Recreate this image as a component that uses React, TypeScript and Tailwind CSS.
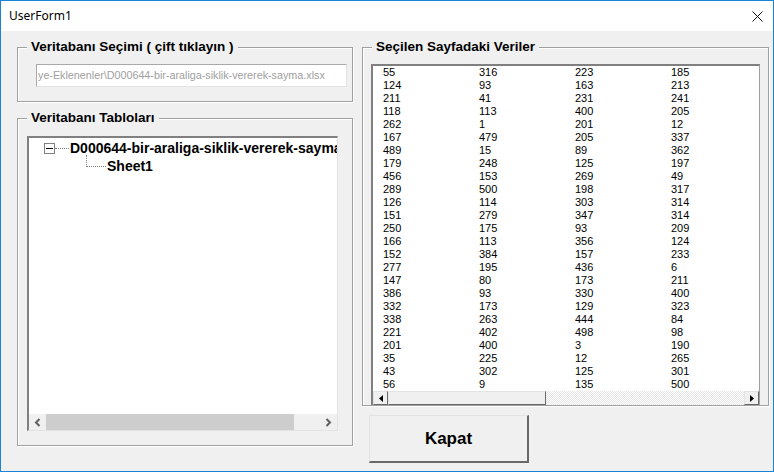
import React from "react";

const rows: string[][] = [
  ["55", "316", "223", "185"],
  ["124", "93", "163", "213"],
  ["211", "41", "231", "241"],
  ["118", "113", "400", "205"],
  ["262", "1", "201", "12"],
  ["167", "479", "205", "337"],
  ["489", "15", "89", "362"],
  ["179", "248", "125", "197"],
  ["456", "153", "269", "49"],
  ["289", "500", "198", "317"],
  ["126", "114", "303", "314"],
  ["151", "279", "347", "314"],
  ["250", "175", "93", "209"],
  ["166", "113", "356", "124"],
  ["152", "384", "157", "233"],
  ["277", "195", "436", "6"],
  ["147", "80", "173", "211"],
  ["386", "93", "330", "400"],
  ["332", "173", "129", "323"],
  ["338", "263", "444", "84"],
  ["221", "402", "498", "98"],
  ["201", "400", "3", "190"],
  ["35", "225", "12", "265"],
  ["43", "302", "125", "301"],
  ["56", "9", "135", "500"],
];

const font = "font-['Liberation_Sans',Arial,sans-serif]";

const Frame: React.FC<{ title: string; className?: string; children: React.ReactNode }> = ({
  title,
  className,
  children,
}) => (
  <fieldset
    className={`border border-[#a0a0a0] shadow-[inset_1px_1px_0_#fff,1px_1px_0_#fff] ${className ?? ""}`}
  >
    <legend className="ml-[9px] px-[4px] bg-[#f0f0f0] text-[13.5px] leading-[16px] font-bold text-black">
      {title}
    </legend>
    {children}
  </fieldset>
);

const ClassicArrow: React.FC<{ dir: "left" | "right" }> = ({ dir }) => (
  <div className="w-[15px] shrink-0 h-full flex items-center justify-center bg-[#f0f0f0] border-t border-l border-t-[#e3e3e3] border-l-[#e3e3e3] border-b border-r border-b-[#696969] border-r-[#696969]">
    <svg width="4" height="7" viewBox="0 0 4 7">
      {dir === "left" ? <path d="M4 0 L0 3.5 L4 7 Z" fill="#000" /> : <path d="M0 0 L4 3.5 L0 7 Z" fill="#000" />}
    </svg>
  </div>
);

export default function App() {
  return (
    <div className={`w-[774px] h-[472px] flex flex-col border border-[#1883d7] bg-[#f0f0f0] ${font}`}>
      {/* title bar */}
      <div className="h-[30px] bg-white flex items-center justify-between pl-[8px] pr-[10px]">
        <span className="text-[12px] text-black font-['Noto_Sans',sans-serif]">UserForm1</span>
        <svg width="11" height="11" viewBox="0 0 11 11">
          <path d="M0.5 0.5 L10.5 10.5 M10.5 0.5 L0.5 10.5" stroke="#111" strokeWidth="1" />
        </svg>
      </div>

      {/* body */}
      <div className="flex-1 flex gap-[9px] pl-[16px] pt-[8px]">
        {/* left column */}
        <div className="w-[336px] flex flex-col">
          <Frame title="Veritabanı Seçimi ( çift tıklayın )" className="pb-[14px]">
            <div className="mt-[9px] ml-[18px] w-[311px] h-[23px] bg-white border border-t-[#a9a9a9] border-l-[#a9a9a9] border-r-[#e3e3e3] border-b-[#e3e3e3] overflow-hidden flex items-center">
              <span className="pl-[1px] whitespace-nowrap text-[10.75px] text-[#a0a0a0]">
                ye-Eklenenler\D000644-bir-araliga-siklik-vererek-sayma.xlsx
              </span>
            </div>
          </Frame>

          <Frame title="Veritabanı Tabloları" className="mt-[8px] pb-[14px]">
            <div className="mt-[10px] ml-[9px] w-[311px] h-[295px] bg-white border-t-2 border-l-2 border-t-[#808080] border-l-[#808080] border-r border-b border-r-[#e3e3e3] border-b-[#e3e3e3] flex flex-col">
              <div className="flex-1 overflow-hidden pt-[1px]">
                <div className="h-[18px] flex items-center whitespace-nowrap">
                  <div className="ml-[15px] shrink-0 w-[11px] h-[11px] border border-[#808080] flex items-center justify-center">
                    <div className="w-[7px] h-[1px] bg-black" />
                  </div>
                  <div className="w-[14px] shrink-0 border-t border-dotted border-[#808080]" />
                  <span className="ml-[1px] shrink-0 text-[14px] font-bold text-black">
                    D000644-bir-araliga-siklik-vererek-sayma
                  </span>
                </div>
                <div className="h-[18px] flex items-start whitespace-nowrap">
                  <div className="ml-[57px] shrink-0 -mt-[2px] w-[20px] h-[12px] border-l border-b border-dotted border-[#808080]" />
                  <span className="ml-[1px] shrink-0 text-[14px] leading-[18px] font-bold text-black">Sheet1</span>
                </div>
              </div>
              {/* modern scrollbar */}
              <div className="h-[16px] flex bg-[#f0f0f0]">
                <div className="w-[17px] shrink-0 flex items-center justify-center">
                  <svg width="7" height="9" viewBox="0 0 7 9">
                    <path d="M5.5 1 L2 4.5 L5.5 8" stroke="#606060" strokeWidth="2" fill="none" />
                  </svg>
                </div>
                <div className="w-[248px] shrink-0 bg-[#cdcdcd]" />
                <div className="flex-1" />
                <div className="w-[17px] shrink-0 flex items-center justify-center">
                  <svg width="7" height="9" viewBox="0 0 7 9">
                    <path d="M1.5 1 L5 4.5 L1.5 8" stroke="#606060" strokeWidth="2" fill="none" />
                  </svg>
                </div>
              </div>
            </div>
          </Frame>
        </div>

        {/* right column */}
        <div className="w-[407px] flex flex-col">
          <Frame title="Seçilen Sayfadaki Veriler">
            <div className="mt-[9px] ml-[8px] w-[389px] h-[341px] bg-white border-t-2 border-l-2 border-t-[#808080] border-l-[#808080] border-r border-r-[#a0a0a0] flex flex-col">
              <div className="flex-1 overflow-hidden pl-[10px]">
                {rows.map((r, i) => (
                  <div key={i} className="flex h-[13px] text-[11px] leading-[13px] text-black">
                    {r.map((v, j) => (
                      <span key={j} className="w-[96px] shrink-0">
                        {v}
                      </span>
                    ))}
                  </div>
                ))}
              </div>
              {/* classic scrollbar */}
              <div className="h-[14px] flex">
                <ClassicArrow dir="left" />
                <div className="w-[158px] shrink-0 bg-[#f0f0f0] border-t border-l border-t-[#e3e3e3] border-l-[#e3e3e3] border-b border-r border-b-[#696969] border-r-[#696969]" />
                <div className="flex-1 bg-[repeating-conic-gradient(#ffffff_0_25%,#e6e6e6_0_50%)] bg-[length:2px_2px]" />
                <ClassicArrow dir="right" />
              </div>
            </div>
          </Frame>

          <button className="mt-[9px] ml-[7px] w-[160px] h-[48px] bg-[#f0f0f0] border-t border-l border-t-[#e3e3e3] border-l-[#e3e3e3] border-b-2 border-r-2 border-b-[#696969] border-r-[#696969] text-[17px] font-bold text-black">
            Kapat
          </button>
        </div>
      </div>
    </div>
  );
}
